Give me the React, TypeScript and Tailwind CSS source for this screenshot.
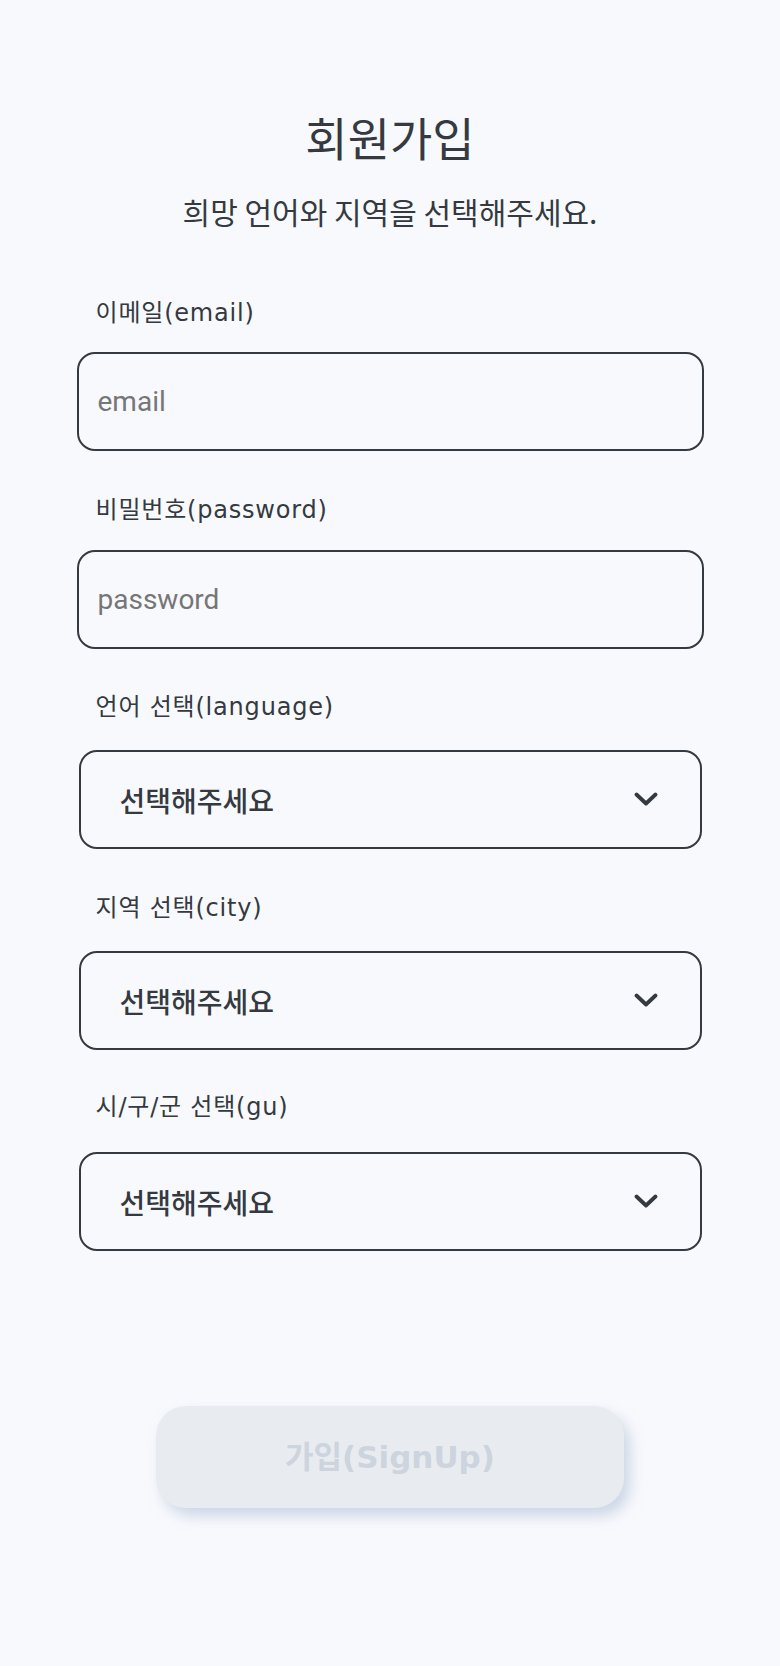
import React from "react";

const font = { fontFamily: '"Noto Sans CJK KR", "Noto Sans", sans-serif' };
const labelFont = { fontFamily: '"DejaVu Sans", "Noto Sans CJK KR", sans-serif' };

function Chevron() {
  return (
    <svg width="24" height="15" viewBox="0 0 24 15" fill="none">
      <path d="M2.5 2.5 L12 11.5 L21.5 2.5" stroke="#343a40" strokeWidth="3.8" strokeLinecap="round" strokeLinejoin="round" />
    </svg>
  );
}

function Label({ children }: { children: React.ReactNode }) {
  return (
    <div className="h-[30px] whitespace-nowrap pl-[19px] text-[24px] leading-[30px] tracking-[0.8px] text-[#343a40]" style={labelFont}>
      {children}
    </div>
  );
}

function Input({ placeholder, type }: { placeholder: string; type: string }) {
  return (
    <input
      type={type}
      placeholder={placeholder}
      className="block h-[99px] w-full rounded-[18px] border-2 border-[#343a40] bg-transparent pl-[19px] text-[28px] text-[#343a40] outline-none placeholder:text-[#767676]"
      style={{ fontFamily: 'Roboto, "Noto Sans CJK KR", sans-serif' }}
    />
  );
}

function Select() {
  return (
    <div className="mx-[2px] flex h-[99px] items-center justify-between rounded-[18px] border-2 border-[#343a40] pl-[39px] pr-[42px]">
      <span className="text-[28px] font-medium text-[#343a40]">선택해주세요</span>
      <Chevron />
    </div>
  );
}

export default function App() {
  return (
    <div className="min-h-[1666px] w-full bg-[#f8f9fd]" style={font}>
      <div className="mx-auto w-[627px] pt-[104px]">
        <h1 className="text-center text-[46px] font-normal leading-[64px] text-[#343a40]">회원가입</h1>
        <p className="mt-[23px] text-center text-[30px] leading-[40px] text-[#343a40]">희망 언어와 지역을 선택해주세요.</p>

        <div className="mt-[67px]">
          <Label>이메일(email)</Label>
          <div className="mt-[24px]">
            <Input type="email" placeholder="email" />
          </div>
        </div>

        <div className="mt-[44px]">
          <Label>비밀번호(password)</Label>
          <div className="mt-[25px]">
            <Input type="password" placeholder="password" />
          </div>
        </div>

        <div className="mt-[43px]">
          <Label>언어 선택(language)</Label>
          <div className="mt-[28px]">
            <Select />
          </div>
        </div>

        <div className="mt-[44px]">
          <Label>지역 선택(city)</Label>
          <div className="mt-[28px]">
            <Select />
          </div>
        </div>

        <div className="mt-[42px]">
          <Label>시/구/군 선택(gu)</Label>
          <div className="mt-[30px]">
            <Select />
          </div>
        </div>

        <div className="mt-[155px] flex justify-center">
          <button
            className="flex h-[102px] w-[468px] items-center justify-center rounded-[30px] bg-[#e8ecf0] text-[31px] font-bold text-[#cdd4de] shadow-[6px_8px_14px_rgba(170,188,212,0.55)]"
            style={labelFont}
          >
            가입(SignUp)
          </button>
        </div>
      </div>
    </div>
  );
}
